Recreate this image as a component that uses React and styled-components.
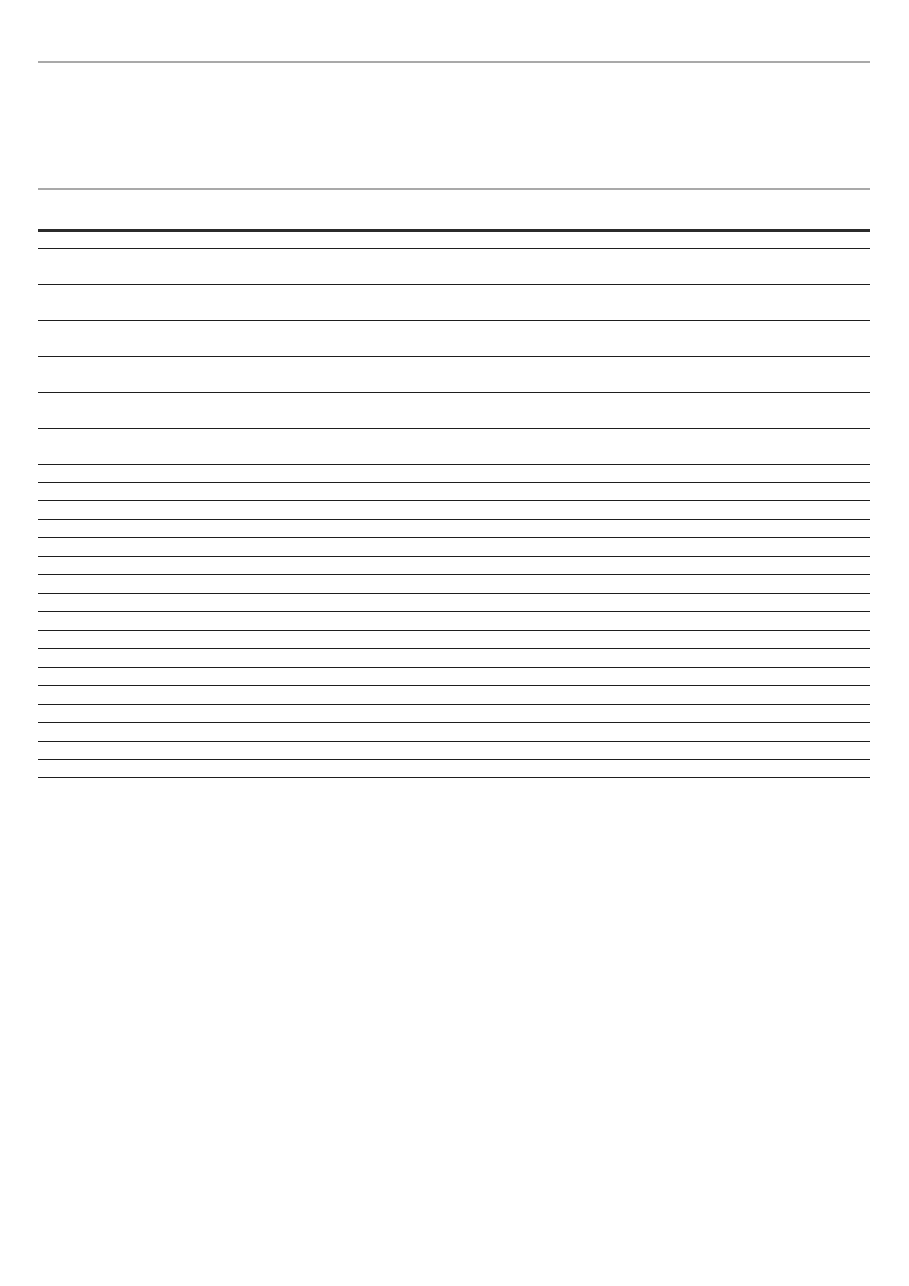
import React from "react";
import styled, { createGlobalStyle } from "styled-components";

const GlobalStyle = createGlobalStyle`
    body {
        margin: 0;
        background: #ffffff;
        font-family: "Liberation Sans", Arial, sans-serif;
    }
`;

const Page = styled.div`
    width: 832px;
    padding: 61px 0 0 38px;
`;

const Rule = styled.div`
    height: 2px;
    background: #a9a9a9;
`;

const Header = styled.div`
    height: 125px;
`;

const Table = styled.table`
    width: 100%;
    border-collapse: collapse;
    table-layout: fixed;
`;

const HeadRow = styled.tr`
    height: 40px;
    border-bottom: 3px solid #2b2b2b;
    box-shadow: 0 -1px 0 #9a9a9a inset;
`;

const Row = styled.tr`
    height: ${(p) => p.h}px;
    border-bottom: 1px solid #1e1e1e;
`;

const Cell = styled.td`
    padding: 0;
    font-size: 11px;
    color: #f6f6f6;
`;

const rows = [
    { h: 18 },
    ...Array.from({ length: 6 }, () => ({ h: 36 })),
    ...Array.from({ length: 17 }, () => ({ h: 18.47 })),
];

const App = () => {
    return (
        <>
            <GlobalStyle />
            <Page>
                <Rule />
                <Header />
                <Rule />
                <Table>
                    <thead>
                        <HeadRow>
                            <Cell />
                        </HeadRow>
                    </thead>
                    <tbody>
                        {rows.map((r, i) => (
                            <Row key={i} h={r.h}>
                                <Cell />
                            </Row>
                        ))}
                    </tbody>
                </Table>
            </Page>
        </>
    );
};

export default App;
